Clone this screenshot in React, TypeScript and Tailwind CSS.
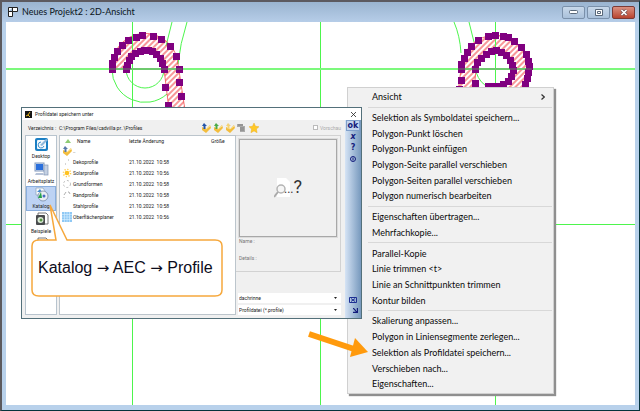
import React from "react";

const UI = "font-['Lato','Open_Sans',sans-serif]";
const DIALOG_FONT = "font-['Roboto','Liberation_Sans',sans-serif]";

const menuGroups: string[][] = [
  ["Ansicht"],
  [
    "Selektion als Symboldatei speichern...",
    "Polygon-Punkt löschen",
    "Polygon-Punkt einfügen",
    "Polygon-Seite parallel verschieben",
    "Polygon-Seiten parallel verschieben",
    "Polygon numerisch bearbeiten",
  ],
  ["Eigenschaften übertragen...", "Mehrfachkopie..."],
  ["Parallel-Kopie", "Linie trimmen <t>", "Linie an Schnittpunkten trimmen", "Kontur bilden"],
  [
    "Skalierung anpassen...",
    "Polygon in Liniensegmente zerlegen...",
    "Selektion als Profildatei speichern...",
    "Verschieben nach...",
    "Eigenschaften...",
  ],
];

const files = [
  { name: "Dekoprofile", date: "21.10.2022  10:58", icon: "dots" },
  { name: "Solarprofile", date: "21.10.2022  10:56", icon: "sun" },
  { name: "Grundformen", date: "21.10.2022  10:58", icon: "ring" },
  { name: "Randprofile", date: "21.10.2022  10:58", icon: "edge" },
  { name: "Stahlprofile", date: "21.10.2022  10:58", icon: "none" },
  { name: "Oberflächenplaner", date: "21.10.2022  10:56", icon: "grid" },
];

const leftHandles: [number, number][] = [
  [112, 69], [112, 63], [114, 57], [117, 51], [122, 45], [128, 40], [136, 37], [142, 35],
  [153, 36], [161, 39], [170, 46], [176, 56], [179, 69], [179, 82], [181, 96],
  [126, 69], [127, 65], [129, 60], [131, 56], [135, 53], [140, 51], [144, 50], [148, 50],
  [152, 51], [156, 54], [160, 58], [162, 63], [164, 69], [165, 87], [168, 105],
];
const rightHandles: [number, number][] = [
  [461, 69], [461, 64], [464, 58], [467, 52], [471, 46], [478, 40], [488, 36], [495, 35],
  [503, 36], [508, 37], [514, 41], [521, 47], [526, 54], [528, 61], [529, 66], [528, 72],
  [527, 78], [525, 84], [461, 80], [459, 89],
  [475, 69], [477, 62], [481, 58], [486, 54], [491, 51], [496, 50], [501, 52], [506, 55],
  [510, 60], [512, 65], [513, 70], [511, 76], [508, 81], [503, 84], [498, 86], [492, 86],
  [488, 86], [475, 83],
];

function Drawing() {
  return (
    <svg className="absolute inset-0 h-full w-full" fill="none" aria-hidden="true">
      <defs>
        <pattern id="hatch" width="4" height="4" patternUnits="userSpaceOnUse" patternTransform="rotate(45)">
          <path d="M2 0V4" stroke="#f03030" strokeWidth="1" />
        </pattern>
      </defs>
      <g transform="translate(-6 -22)">
        <g stroke="#4df54d">
          <path d="M132.500 22V900M320.500 22V900M495.500 22V900M0 224.500H2000" />
          <path d="M112 69A33 33 0 0 0 167 94M126 69A19 19 0 0 0 164 69" />
          <path d="M172 22L166 46M187 22Q180 44 178 64M454 22Q460 36 461 53M469 22L474 42" />
          <path d="M476 72Q480 84 489 87" />
        </g>
        <path
          d="M112 69A33 33 0 0 1 178 64L185 110H169L164 69A19 19 0 0 0 126 69Z"
          fill="url(#hatch)"
          stroke="#ee3a3a"
          strokeWidth=".7"
        />
        <path
          d="M458 92L461 69A34 34 0 1 1 522 90H495V87A18 18 0 1 0 476 69L474 92Z"
          fill="url(#hatch)"
          stroke="#ee3a3a"
          strokeWidth=".7"
        />
        <path d="M132.500 34V68M495.500 34V92" stroke="#4df54d" />
        <path d="M0 69H2000" stroke="#7cf97c" strokeWidth="2" />
        <g fill="#800080">
          {[...leftHandles, ...rightHandles].map(([x, y]) => (
            <rect key={`${x}-${y}`} x={x - 3} y={y - 3} width="7" height="7" />
          ))}
        </g>
        <path d="M109 69H182M458 69H532" stroke="#5f8f5f" strokeWidth="1.500" opacity=".6" />
      </g>
    </svg>
  );
}

function FileIcon({ kind }: { kind: string }) {
  return (
    <svg className="h-[10px] w-[10px] shrink-0" viewBox="0 0 10 10" fill="none" aria-hidden="true">
      {kind === "dots" && <path d="M3 7h1M6 3h1" stroke="#888" strokeWidth=".7" />}
      {kind === "sun" && (
        <>
          <circle cx="5" cy="5" r="2.300" fill="#ffc21f" />
          <circle cx="5" cy="5" r="3.600" stroke="#ffca45" strokeWidth="1.400" strokeDasharray="1.200 1.600" />
        </>
      )}
      {kind === "ring" && <circle cx="5" cy="5" r="3.500" stroke="#aaa" strokeWidth=".8" strokeDasharray="2 2" />}
      {kind === "edge" && <path d="M2 8V7M2 5l2-3M6 2h1l1 2" stroke="#999" strokeWidth=".8" />}
      {kind === "grid" && (
        <>
          <path d="M0 0h10v10H0z" fill="#8fc8f4" />
          <path d="M0 2.500h10M0 5h10M0 7.500h10M2.500 0v10M5 0v10M7.500 0v10" stroke="#d9f0ff" strokeWidth=".6" />
        </>
      )}
    </svg>
  );
}

function UpFolder({ accent }: { accent: string }) {
  return (
    <svg className="h-[10px] w-[10px]" viewBox="0 0 10 10" aria-hidden="true">
      <path d="M1 4l4 2 4-4 1 3-5 5-4-3z" fill="#f3bd3d" />
      <path d="M2 4l3 2 4-3" fill="none" stroke="#fff0b0" strokeWidth=".8" />
      <path d="M3 0l3 3H4.500v3h-2V3H1z" fill={accent} />
    </svg>
  );
}

function PlaceIcon({ kind }: { kind: string }) {
  return (
    <svg className="h-[15px] w-[15px]" viewBox="0 0 15 15" fill="none" aria-hidden="true">
      {kind === "desktop" && (
        <>
          <rect x="1" y="1" width="13" height="13" rx="2" fill="#1b7fc4" />
          <rect x="3" y="3" width="9" height="9" rx="1" fill="#f4f9fd" />
          <path d="M6 8l6-6 2 1-6 6z" fill="#8fb8da" />
          <path d="M7 5a3 3 0 1 0 3 4" stroke="#3a8dcc" />
        </>
      )}
      {kind === "computer" && (
        <>
          <rect x="1" y="1" width="9" height="8" fill="#d5e2f4" stroke="#8299bd" />
          <rect x="2" y="2" width="7" height="6" fill="#2a6fdc" />
          <rect x="10" y="3" width="4" height="10" fill="#c4d0e2" stroke="#8094b4" strokeWidth=".7" />
          <path d="M2 11h7l1 2H1z" fill="#b4c1d7" />
        </>
      )}
      {kind === "catalog" && (
        <>
          <path d="M2 1h7l2 3v4H2z" fill="#f8fafc" stroke="#8ba0b8" strokeWidth=".7" />
          <path d="M3 5l3-3 2 3z" fill="#438bd1" />
          <circle cx="9" cy="9" r="5" fill="#e9edf4" stroke="#7389a5" strokeWidth=".8" />
          <path d="M4 11l3-6 1 6z" fill="#27a34b" />
          <circle cx="10" cy="9" r="1.500" fill="#486bc3" />
        </>
      )}
      {kind === "examples" && (
        <>
          <path d="M4 1h8l2 2v9H4z" fill="#fff" stroke="#555" strokeWidth=".8" />
          <rect x="2" y="3" width="9" height="10" rx="1" fill="#4a4c4e" />
          <circle cx="6.500" cy="8" r="3" fill="#dcebd8" />
          <circle cx="7" cy="8" r="1.500" fill="#559342" />
        </>
      )}
    </svg>
  );
}

const places = [
  { name: "Desktop", icon: "desktop" },
  { name: "Arbeitsplatz", icon: "computer" },
  { name: "Katalog", icon: "catalog" },
  { name: "Beispiele", icon: "examples" },
  { name: "", icon: "examples" },
];

function SaveDialog() {
  return (
    <section
      aria-label="Profildatei speichern unter"
      className={`absolute left-[21px] top-[107px] flex h-[212px] w-[341px] flex-col border border-[#53707a] bg-[#f0f0f0] text-[5px] leading-[8px] text-[#222] ${DIALOG_FONT}`}
    >
      <header className="flex h-3 shrink-0 items-center bg-white pl-[3px] pr-1">
        <svg className="mr-[3px] h-[7px] w-[7px]" viewBox="0 0 7 7" aria-hidden="true">
          <path d="M0 0h7v7H0z" fill="#151515" />
          <path d="M1 5l2-1 2-3M3 4l2 2" stroke="#e7b51c" fill="none" />
        </svg>
        <h2 className="flex-1">Profildatei speichern unter</h2>
        <button aria-label="Schließen" className="flex h-2 w-2 items-center justify-center">
          <svg className="h-[5px] w-[5px]" viewBox="0 0 5 5" stroke="#222" strokeWidth=".8" aria-hidden="true">
            <path d="M0 0l5 5M5 0L0 5" />
          </svg>
        </button>
      </header>
      <div className="flex min-h-0 flex-1">
        <div className="flex flex-1 flex-col">
          <div className="flex h-[15px] shrink-0 items-center whitespace-nowrap pl-[6px]">
            <span className="w-[31px]">Verzeichnis :</span>
            <span className="w-[142px]">C:\Program Files/cadvilla pr..\Profiles</span>
            <div className="flex w-[112px] gap-[2px]">
              <button aria-label="Übergeordneter Ordner"><UpFolder accent="#2454a8" /></button>
              <button aria-label="Neuer Ordner"><UpFolder accent="#4caa48" /></button>
              <button aria-label="Ordner umbenennen"><UpFolder accent="#f3d277" /></button>
              <button aria-label="Löschen">
                <svg className="h-[10px] w-[10px]" viewBox="0 0 10 10" aria-hidden="true">
                  <path d="M0 1h6v3H0zM3 3h5v6H3z" fill="#aaa" />
                  <path d="M1 2h5M4 4v4M6 4v4" stroke="#666" strokeWidth=".6" />
                </svg>
              </button>
              <button aria-label="Favoriten">
                <svg className="h-[10px] w-[10px]" viewBox="0 0 10 10" aria-hidden="true">
                  <path d="M5 0l1.500 3.300 3.500.4-2.600 2.400.7 3.600L5 8 1.900 9.700l.7-3.600L0 3.700l3.500-.4z" fill="#ffc928" stroke="#e8a414" strokeWidth=".4" />
                </svg>
              </button>
            </div>
            <label className="flex items-center gap-[2px] text-[#aaa]">
              <input type="checkbox" disabled className="h-[5px] w-[5px] appearance-none border border-[#bbb] bg-white" />
              Vorschau
            </label>
          </div>
          <div className="flex min-h-0 flex-1 gap-[2px] pb-[3px] pl-[3px]">
            <nav className="flex w-[32px] flex-col overflow-hidden border border-[#b8c4ce] bg-white">
              {places.map((p) => (
                <button
                  key={p.name}
                  className={
                    p.name === "Katalog"
                      ? "flex h-[25px] shrink-0 flex-col items-center border border-[#89aede] bg-[#bdd3f4]"
                      : "flex h-[25px] shrink-0 flex-col items-center border border-transparent"
                  }
                >
                  <PlaceIcon kind={p.icon} />
                  <span className="block">{p.name}</span>
                </button>
              ))}
            </nav>
            <div className="w-[177px] border border-[#bcc5cc] bg-white">
              <table className="w-full table-fixed text-left">
                <thead>
                  <tr className="h-[10px]">
                    <th className="w-[13px] p-0 pl-[5px]">
                      <svg className="h-1 w-[6px]" viewBox="0 0 6 4" aria-hidden="true"><path d="M0 4l3-4 3 4z" fill="#8fcc74" /></svg>
                    </th>
                    <th className="w-[56px] p-0 pl-1 font-normal">Name</th>
                    <th className="w-[82px] p-0 font-normal">letzte Änderung</th>
                    <th className="p-0 font-normal">Größe</th>
                  </tr>
                </thead>
                <tbody className="whitespace-pre">
                  <tr className="h-[10px]">
                    <td className="p-0 pl-[2px]"><UpFolder accent="#5979aa" /></td>
                    <td className="p-0" colSpan={3}>..</td>
                  </tr>
                  {files.map((f) => (
                    <tr key={f.name} className="h-[11px]">
                      <td className="p-0 pl-[2px]"><FileIcon kind={f.icon} /></td>
                      <td className="p-0">{f.name}</td>
                      <td className="p-0">{f.date}</td>
                      <td className="p-0" />
                    </tr>
                  ))}
                </tbody>
              </table>
            </div>
            <div className="-ml-[2px] flex w-[105px] flex-col">
              <div className="flex h-[137px] flex-col border border-l-0 border-[#d2d2d2] p-[3px] text-[#777]">
                <div className="flex h-[98px] items-center justify-center border border-[#a8a8a8] outline-1 outline-[#dcdcdc]">
                  <svg className="h-5 w-4" viewBox="0 0 16 20" fill="none" aria-hidden="true">
                    <path d="M3 0h9l4 4v15H3z" fill="#fff" />
                    <circle cx="7" cy="11" r="4" fill="#f6f6f6" stroke="#b4b4b4" strokeWidth="1.500" />
                    <path d="M4 14l-4 5" stroke="#aaa" strokeWidth="2" />
                  </svg>
                  <span className="-ml-[6px] text-[12px] leading-5 text-[#333]">
                    ...<span className="text-[18px]">?</span>
                  </span>
                </div>
                <p>Name :</p>
                <p className="pt-[9px]">Details :</p>
              </div>
              <div className="mt-auto flex flex-col gap-[2px] pl-[2px]">
                {["dachrinne", "Profildatei (*.profile)"].map((v) => (
                  <div key={v} className="relative h-[10px] bg-white">
                    <select aria-label={v} className="block h-[10px] w-full appearance-none bg-transparent pl-[1px] leading-[10px]">
                      <option>{v}</option>
                    </select>
                    <svg className="pointer-events-none absolute right-1 top-1 h-[2px] w-[3px]" viewBox="0 0 3 2" aria-hidden="true"><path d="M0 0h3L1.500 2z" fill="#222" /></svg>
                  </div>
                ))}
              </div>
            </div>
          </div>
        </div>
        <div className="flex w-[16px] flex-col items-center bg-linear-to-r from-[#d6e4f5] to-[#7799bd] text-[8px] font-bold leading-[11px] text-[#141c7c] font-['DejaVu_Sans',sans-serif]">
          <button className="h-[11px] w-[14px] border border-[#7f9fca] bg-[#c3d5ee] leading-[8px]">ok</button>
          <button className="h-[11px] italic">x</button>
          <button className="h-[11px]">?</button>
          <button className="flex h-[11px] items-center" aria-label="Information">
            <svg className="h-[6px] w-[6px]" viewBox="0 0 6 6" fill="none" stroke="#141c7c" aria-hidden="true"><circle cx="3" cy="3" r="2.500" /><path d="M3 1.500v3" /></svg>
          </button>
          <button className="mt-auto flex h-[11px] items-center" aria-label="Ansicht anpassen">
            <svg className="h-[6px] w-[8px]" viewBox="0 0 8 6" fill="none" stroke="#1d2f93" aria-hidden="true"><path d="M.5.500h7v5h-7zM2 1.500l4 3M6 1.500l-4 3" /></svg>
          </button>
          <button className="mb-[2px] flex h-[11px] items-center pl-1" aria-label="Verkleinern">
            <svg className="h-[5px] w-[5px]" viewBox="0 0 5 5" fill="none" stroke="#141c7c" strokeWidth="1.200" aria-hidden="true"><path d="M0 0l4 4M4.400 0v4.400H0" /></svg>
          </button>
        </div>
      </div>
    </section>
  );
}

function ContextMenu() {
  return (
    <div role="menu" className={`absolute left-[347px] top-[87px] flex h-[307px] w-[207px] flex-col border border-[#d0d0d0] bg-[#f1f1f1] py-px text-[9px] text-[#0a0a0a] shadow-[2px_2px_1px_#8f8f8f] ${UI}`}>
      {menuGroups.map((group, i) => (
        <React.Fragment key={group[0]}>
          {i > 0 && <div role="separator" className="my-[2px] ml-5 mr-px h-px shrink-0 bg-[#d8d8d8]" />}
          {group.map((label) => (
            <button key={label} role="menuitem" className="flex min-h-0 flex-1 items-center justify-between whitespace-nowrap pl-6 pr-2 text-left">
              {label}
              {label === "Ansicht" && (
                <svg className="h-[6px] w-[4px]" viewBox="0 0 4 6" fill="none" stroke="#333" strokeWidth="1.200" aria-hidden="true"><path d="M.5.500L3.300 3 .5 5.500" /></svg>
              )}
            </button>
          ))}
        </React.Fragment>
      ))}
    </div>
  );
}

const winButton = "flex h-[13px] w-[23px] items-center justify-center rounded-[2px] border border-[#7a90aa] bg-linear-to-b from-[#c8d8ea] to-[#a9c0da]";
const arrow = "font-['DejaVu_Sans',sans-serif] text-[15px]";

export default function App() {
  return (
    <div className="relative flex min-h-screen flex-col overflow-hidden border-b border-l-2 border-r border-t-2 border-b-[#04343c] border-l-[#5c5a5e] border-r-[#04343c] border-t-[#5c5a60] bg-[#b8d1eb]">
      <header className="flex h-5 shrink-0 items-center bg-linear-to-b from-[#9ab4d0] to-[#b6cde8] pl-[6px] pr-[4px]">
        <svg className="mr-1 h-[10px] w-[10px]" viewBox="0 0 10 10" fill="#fff" stroke="#222" aria-hidden="true">
          <path d="M.5.500h9v4h-5v5h-4zM.5 4.500h4v-4" />
        </svg>
        <h1 className={`flex-1 text-[9px] leading-4 text-[#0b1520] ${UI}`}>Neues Projekt2 : 2D-Ansicht</h1>
        <div className="flex gap-[2px]">
          <button aria-label="Minimieren" className={winButton}>
            <svg className="h-1 w-[9px]" viewBox="0 0 9 4" aria-hidden="true"><rect x=".5" y=".5" width="8" height="3" rx="1" fill="#fff" stroke="#59687a" /></svg>
          </button>
          <button aria-label="Maximieren" className={winButton}>
            <svg className="h-[7px] w-2" viewBox="0 0 8 7" fill="none" aria-hidden="true"><path d="M.5.500h7v6h-7z" fill="#fff" stroke="#59687a" /><path d="M2.500 2.500h3v2h-3z" stroke="#59687a" /></svg>
          </button>
          <button aria-label="Fenster schließen" className="flex h-[13px] w-[23px] items-center justify-center rounded-[2px] border border-[#7c3a35] bg-linear-to-b from-[#d98f80] to-[#b8432f]">
            <svg className="h-[7px] w-2" viewBox="0 0 8 7" fill="none" aria-hidden="true"><path d="M1.500 1l5 5M6.500 1l-5 5" stroke="#6b4d52" strokeWidth="3" /><path d="M1.500 1l5 5M6.500 1l-5 5" stroke="#fff" strokeWidth="1.700" /></svg>
          </button>
        </div>
      </header>
      <main className="relative mx-1 mb-[5px] flex-1 overflow-hidden bg-white">
        <Drawing />
      </main>
      <div className="absolute -left-[2px] -top-[2px]">
        <ContextMenu />
        <SaveDialog />
        <svg className="pointer-events-none absolute left-0 top-0 h-[411px] w-[400px]" fill="none" aria-hidden="true">
          <path
            d="M38 240H56L50 205L67 240H215Q222 240 222 246V290Q222 296 215 296H39Q32 296 32 290V246Q32 240 39 240Z"
            fill="#fff"
            stroke="#f6a83c"
            strokeWidth="1.500"
          />
          <path d="M309 334L354 349" stroke="#ff9a0d" strokeWidth="6" />
          <path d="M355 338L368 352L350 357Z" fill="#ff9a0d" />
        </svg>
        <p className="absolute left-[38px] top-[256px] whitespace-pre font-['Liberation_Sans',sans-serif] text-[16px] leading-6 text-[#0c0c1c]">
          Katalog <span className={arrow}>→</span> AEC <span className={arrow}>→</span> Profile
        </p>
      </div>
    </div>
  );
}
